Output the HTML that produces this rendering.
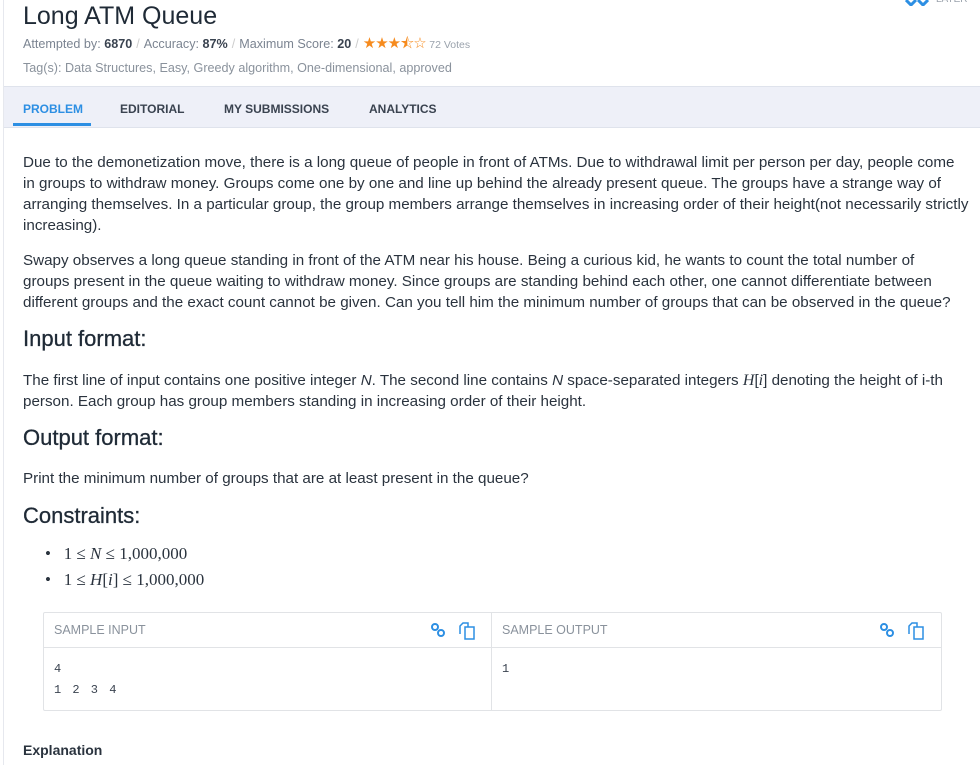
<!DOCTYPE html>
<html><head><meta charset="utf-8"><style>
body{margin:0;width:980px;height:765px;overflow:hidden;background:#fff;font-family:"Liberation Sans",sans-serif;color:#1f2a36;position:relative}
.lb{position:absolute;left:3px;top:0;bottom:0;width:1px;background:#e6e8ee}
h1{position:absolute;left:23px;top:1px;margin:0;font-size:25px;font-weight:normal;color:#1f2a36;line-height:30px}
.meta{position:absolute;left:23px;top:33px;font-size:12.6px;color:#7b8491}
.meta b{color:#3a4350}
.meta .s{color:#ccc;margin:0 4px}
.stars{color:#f68b1e;font-size:15px;letter-spacing:-1px}
.tags{position:absolute;left:23px;top:61px;font-size:12.6px;color:#8a929c}
.tabs{position:absolute;left:4px;right:0;top:86px;height:40px;background:#eef0f8;border-top:1px solid #dfe3ec;border-bottom:1px solid #dfe3ec}
.tab{position:absolute;top:15px;font-size:12px;font-weight:bold;color:#3a4350}
.act{color:#2d8fe3}
.ul{position:absolute;left:9px;top:36px;width:78px;height:3px;background:#2d8fe3}
.c{position:absolute;left:23px;width:940px;font-size:15.2px;line-height:21px;color:#2a333e}
h2{position:absolute;left:23px;margin:0;font-size:22px;font-weight:normal;color:#1f2a36;-webkit-text-stroke:0.3px #1f2a36}
.m{font-family:"Liberation Serif",serif;font-style:italic;font-size:16px}
.box{position:absolute;left:43px;top:612px;width:897px;height:97px;border:1px solid #e1e3e6;border-radius:2px}
.col{position:absolute;top:0;height:97px}
.hd{position:absolute;top:10px;font-size:12.5px;color:#8a929c}
.hl{position:absolute;left:0;right:0;top:34px;height:1px;background:#e1e3e6}
.pre{position:absolute;top:46px;font-family:"Liberation Mono",monospace;font-size:12px;line-height:21px;color:#3a4350;white-space:pre;letter-spacing:2px}
.ic{position:absolute;top:9px}
</style></head><body>
<div class="lb"></div>
<svg style="position:absolute;left:905px;top:0" width="24" height="6"><path d="M1 0 L6 5 L11 0 M13 0 L18 5 L23 0" stroke="#2d8fe3" stroke-width="3" fill="none"/></svg>
<div style="position:absolute;left:936px;top:-6px;font-size:10px;color:#9aa2ac">LATER</div>
<h1>Long ATM Queue</h1>
<div class="meta">Attempted by: <b>6870</b><span class="s">/</span>Accuracy: <b>87%</b><span class="s">/</span>Maximum Score: <b>20</b><span class="s">/</span><span class="stars">★★★⯪☆</span> <span style="font-size:10.5px;color:#9aa2ac">72 Votes</span></div>
<div class="tags">Tag(s): Data Structures, Easy, Greedy algorithm, One-dimensional, approved</div>
<div class="tabs">
<span class="tab act" style="left:19px">PROBLEM</span>
<span class="tab" style="left:116px">EDITORIAL</span>
<span class="tab" style="left:220px">MY SUBMISSIONS</span>
<span class="tab" style="left:365px">ANALYTICS</span>
<div class="ul"></div></div>
<div class="c" style="top:152px;white-space:nowrap">Due to the demonetization move, there is a long queue of people in front of ATMs. Due to withdrawal limit per person per day, people come<br>in groups to withdraw money. Groups come one by one and line up behind the already present queue. The groups have a strange way of<br>arranging themselves. In a particular group, the group members arrange themselves in increasing order of their height(not necessarily strictly<br>increasing).</div>
<div class="c" style="top:250px">Swapy observes a long queue standing in front of the ATM near his house. Being a curious kid, he wants to count the total number of groups present in the queue waiting to withdraw money. Since groups are standing behind each other, one cannot differentiate between different groups and the exact count cannot be given. Can you tell him the minimum number of groups that can be observed in the queue?</div>
<h2 style="top:326px">Input format:</h2>
<div class="c" style="top:370px">The first line of input contains one positive integer <i>N</i>. The second line contains <i>N</i> space-separated integers <span class="m">H</span>[<span class="m">i</span>] denoting the height of i-th person. Each group has group members standing in increasing order of their height.</div>
<h2 style="top:425px">Output format:</h2>
<div class="c" style="top:468px">Print the minimum number of groups that are at least present in the queue?</div>
<h2 style="top:503px">Constraints:</h2>
<div class="c" style="top:541px;left:45px;font-family:'Liberation Serif',serif;font-size:17px;line-height:26px">•&nbsp;&nbsp; 1 ≤ <i>N</i> ≤ 1,000,000<br>•&nbsp;&nbsp; 1 ≤ <i>H</i>[<i>i</i>] ≤ 1,000,000</div>
<div class="box">
<div class="col" style="left:0;width:447px;border-right:1px solid #e1e3e6">
<span class="hd" style="left:10px">SAMPLE INPUT</span>
<svg class="ic" style="left:386px" width="16" height="16"><circle cx="5" cy="5" r="3" stroke="#2d8fe3" stroke-width="2" fill="none"/><circle cx="11" cy="11" r="3" stroke="#2d8fe3" stroke-width="2" fill="none"/></svg>
<svg class="ic" style="left:414px" width="18" height="18"><path d="M2 12V4l3-3h5v4M7 5h9v12H7z" stroke="#2d8fe3" stroke-width="1.5" fill="none"/></svg>
<div class="hl"></div><div class="pre" style="left:10px">4
1 2 3 4</div></div>
<div class="col" style="left:448px;width:449px">
<span class="hd" style="left:10px">SAMPLE OUTPUT</span>
<svg class="ic" style="left:387px" width="16" height="16"><circle cx="5" cy="5" r="3" stroke="#2d8fe3" stroke-width="2" fill="none"/><circle cx="11" cy="11" r="3" stroke="#2d8fe3" stroke-width="2" fill="none"/></svg>
<svg class="ic" style="left:415px" width="18" height="18"><path d="M2 12V4l3-3h5v4M7 5h9v12H7z" stroke="#2d8fe3" stroke-width="1.5" fill="none"/></svg>
<div class="pre" style="left:10px">1</div></div>
<div class="hl"></div>
</div>
<div style="position:absolute;left:23px;top:742px;font-size:14px;font-weight:bold;color:#2a333e">Explanation</div>
</body></html>
